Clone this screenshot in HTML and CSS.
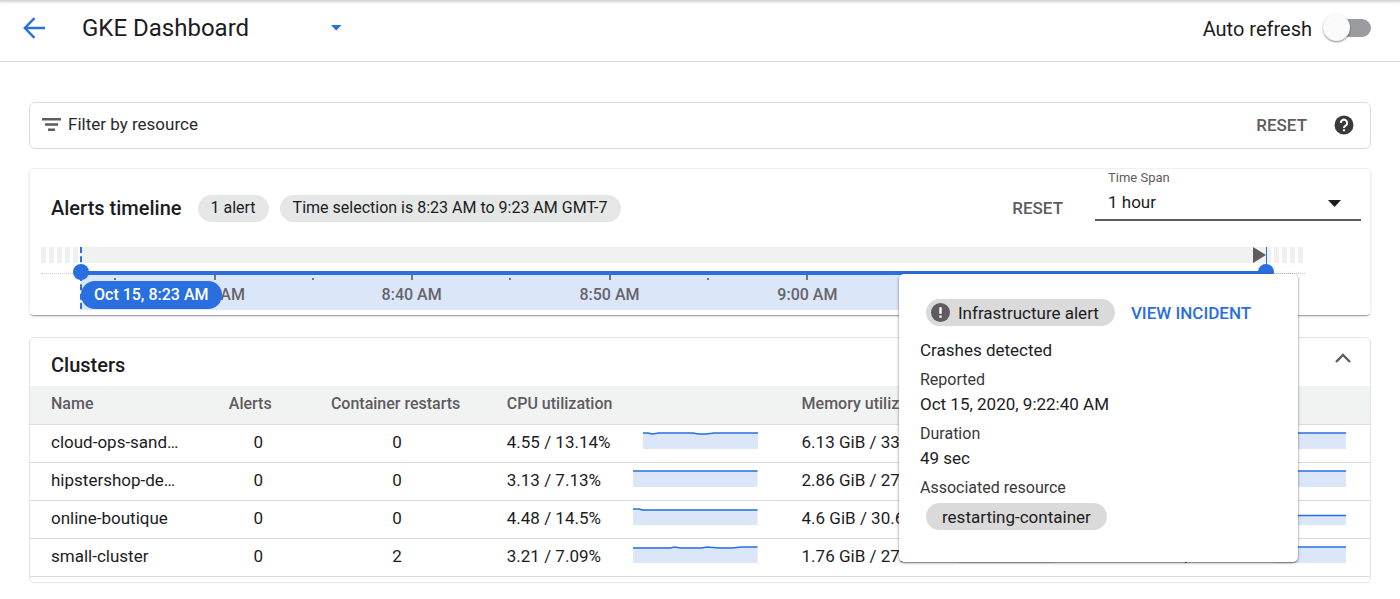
FILE: index.html
```html
<!DOCTYPE html>
<html lang="en">
<head>
<meta charset="utf-8">
<meta name="viewport" content="width=device-width, initial-scale=1">
<title>GKE Dashboard</title>
<link rel="stylesheet" href="styles.css">
</head>
<body>
<header class="topbar">
  <button class="icon-button" aria-label="Back">
    <svg width="22" height="22" viewBox="0 0 22 22" fill="none" stroke="currentColor" stroke-width="2.4"><path d="M22 11H2M11.5 1.2 1.8 11l9.7 9.8"/></svg>
  </button>
  <h1 class="title">GKE Dashboard</h1>
  <button class="icon-button title-menu" aria-label="Choose dashboard">
    <svg width="12" height="6" viewBox="0 0 12 6"><path d="M1 0h10.5L6.2 5.6z" fill="currentColor"/></svg>
  </button>
  <label class="refresh" for="auto-refresh">Auto refresh</label>
  <input class="switch" type="checkbox" role="switch" id="auto-refresh">
</header>

<main class="content">
  <section class="filter" aria-label="Filter">
    <svg class="filter-icon" width="19" height="13" viewBox="0 0 19 13" fill="currentColor"><path d="M0 0h19v2.4H0zM3 5.3h13v2.4H3zM6 10.6h7V13H6z"/></svg>
    <input class="filter-input" type="text" placeholder="Filter by resource" aria-label="Filter by resource">
    <button class="text-button">RESET</button>
    <button class="icon-button help" aria-label="Help">
      <svg width="20" height="20" viewBox="0 0 20 20"><circle cx="10" cy="10" r="9.5" fill="currentColor"/><path d="M6.8 7.9a3.2 3.2 0 1 1 5 2.6c-1.1.8-1.8 1.2-1.8 2.5" fill="none" stroke="#fff" stroke-width="2"/><path d="M9 14.3h2v2H9z" fill="#fff"/></svg>
    </button>
  </section>

  <section class="timeline">
    <div class="timeline-head">
      <h2 class="heading">Alerts timeline</h2>
      <span class="chip">1 alert</span>
      <span class="chip">Time selection is 8:23 AM to 9:23 AM GMT-7</span>
      <button class="text-button push">RESET</button>
      <div class="span-field">
        <label class="span-label" for="span">Time Span</label>
        <select class="span-select" id="span"><option>1 hour</option></select>
        <svg class="span-arrow" width="13" height="7" viewBox="0 0 13 7"><path d="M0 0h13L6.5 7z" fill="currentColor"/></svg>
      </div>
    </div>
    <div class="chart">
      <div class="stub"></div>
      <div class="range">
        <div class="lane">
          <svg class="alert-mark" width="14" height="16" viewBox="0 0 14 16"><path d="M1 0 14 8 1 16z" fill="currentColor"/></svg>
        </div>
        <div class="axis">
          <i class="tick minor" style="left:2.9%"></i>
          <i class="tick" style="left:11.3%"></i><span class="time" style="left:11.3%">8:30 AM</span>
          <i class="tick minor" style="left:19.6%"></i>
          <i class="tick" style="left:27.9%"></i><span class="time" style="left:27.9%">8:40 AM</span>
          <i class="tick minor" style="left:36.2%"></i>
          <i class="tick" style="left:44.6%"></i><span class="time" style="left:44.6%">8:50 AM</span>
          <i class="tick minor" style="left:52.9%"></i>
          <i class="tick" style="left:61.3%"></i><span class="time" style="left:61.3%">9:00 AM</span>
          <i class="tick minor" style="left:69.6%"></i>
          <i class="tick" style="left:77.9%"></i>
        </div>
        <i class="guide"></i><i class="guide guide-end"></i>
        <i class="handle"></i><i class="handle handle-end"></i>
        <span class="start-time">Oct 15, 8:23 AM</span>
        <aside class="popup" aria-label="Alert details">
          <div class="popup-head">
            <span class="chip alert-chip">
              <svg width="19" height="19" viewBox="0 0 19 19"><circle cx="9.5" cy="9.5" r="9.5" fill="#5f5b5e"/><path d="M8.3 4.2h2.4v6.6H8.3zM8.3 12.5h2.4v2.3H8.3z" fill="#fff"/></svg>
              Infrastructure alert
            </span>
            <a class="incident" href="#incident">VIEW INCIDENT</a>
          </div>
          <p class="summary">Crashes detected</p>
          <dl class="facts">
            <dt>Reported</dt><dd>Oct 15, 2020, 9:22:40 AM</dd>
            <dt>Duration</dt><dd>49 sec</dd>
            <dt>Associated resource</dt><dd><span class="chip resource-chip">restarting-container</span></dd>
          </dl>
        </aside>
      </div>
      <div class="stub stub-end"></div>
    </div>
  </section>

  <section class="clusters">
    <div class="clusters-head">
      <h2 class="heading">Clusters</h2>
      <button class="icon-button collapse" aria-label="Collapse clusters">
        <svg width="16" height="10" viewBox="0 0 16 10" fill="none" stroke="currentColor" stroke-width="2.4"><path d="m1 9 7-7 7 7"/></svg>
      </button>
    </div>
    <table class="table">
      <colgroup><col class="c-name"><col class="c-alerts"><col class="c-restarts"><col class="c-cpu"><col class="c-mem"><col></colgroup>
      <thead><tr><th>Name</th><th class="num">Alerts</th><th class="num">Container restarts</th><th>CPU utilization</th><th>Memory utilization</th><th>Disk utilization</th></tr></thead>
      <tbody>
        <tr><td>cloud-ops-sand…</td><td class="num alerts">0</td><td class="num restarts">0</td>
          <td><div class="usage">4.55 / 13.14% <svg class="spark" viewBox="0 0 120 17" preserveAspectRatio="none"><path class="area" d="M0 1h120v16H0z"/><path class="line" d="M0 1h5l5 1 6-1h36l6 1h8l8-1h46"/></svg></div></td>
          <td><div class="usage">6.13 GiB / 33.4% <svg class="spark" viewBox="0 0 120 17" preserveAspectRatio="none"><path class="area" d="M0 1h120v16H0z"/><path class="line" d="M0 1h120"/></svg></div></td>
          <td><div class="usage">12.4 GiB / 0.1% <svg class="spark" viewBox="0 0 120 17" preserveAspectRatio="none"><path class="area" d="M0 1h120v16H0z"/><path class="line" d="M0 1h120"/></svg></div></td></tr>
        <tr><td>hipstershop-de…</td><td class="num alerts">0</td><td class="num restarts">0</td>
          <td><div class="usage">3.13 / 7.13% <svg class="spark" viewBox="0 0 120 17" preserveAspectRatio="none"><path class="area" d="M0 1h120v16H0z"/><path class="line" d="M0 1h120"/></svg></div></td>
          <td><div class="usage">2.86 GiB / 27.1% <svg class="spark" viewBox="0 0 120 17" preserveAspectRatio="none"><path class="area" d="M0 1h120v16H0z"/><path class="line" d="M0 1h120"/></svg></div></td>
          <td><div class="usage">12.4 GiB / 0.1% <svg class="spark" viewBox="0 0 120 17" preserveAspectRatio="none"><path class="area" d="M0 1h120v16H0z"/><path class="line" d="M0 1h120"/></svg></div></td></tr>
        <tr><td>online-boutique</td><td class="num alerts">0</td><td class="num restarts">0</td>
          <td><div class="usage">4.48 / 14.5% <svg class="spark" viewBox="0 0 120 17" preserveAspectRatio="none"><path class="area" d="M0 1h120v16H0z"/><path class="line" d="M0 1h6l3 1h111"/></svg></div></td>
          <td><div class="usage">4.6 GiB / 30.6% <svg class="spark" viewBox="0 0 120 17" preserveAspectRatio="none"><path class="area" d="M0 1h120v16H0z"/><path class="line" d="M0 1h120"/></svg></div></td>
          <td><div class="usage">12.4 GiB / 0.1% <svg class="spark" viewBox="0 0 120 17" preserveAspectRatio="none"><path class="area" d="M0 7h120v10H0z"/><path class="line" d="M0 7.5h120"/></svg></div></td></tr>
        <tr><td>small-cluster</td><td class="num alerts">0</td><td class="num restarts">2</td>
          <td><div class="usage">3.21 / 7.09% <svg class="spark" viewBox="0 0 120 17" preserveAspectRatio="none"><path class="area" d="M0 1h120v16H0z"/><path class="line" d="M0 2h36l4-1 6 1h20l5-1 12 1h12l10-1h15"/></svg></div></td>
          <td><div class="usage">1.76 GiB / 27.7% <svg class="spark" viewBox="0 0 120 17" preserveAspectRatio="none"><path class="area" d="M0 1h120v16H0z"/><path class="line" d="M0 1h120"/></svg></div></td>
          <td><div class="usage">614.98 GiB / 0.05% <svg class="spark" viewBox="0 0 120 17" preserveAspectRatio="none"><path class="area" d="M0 1h120v16H0z"/><path class="line" d="M0 1h120"/></svg></div></td></tr>
      </tbody>
    </table>
  </section>
</main>
</body>
</html>
```

FILE: styles.css
```css
:root {
  --blue: #2a6fdf;
  --pale: #dbe6f9;
  --ink: #1c1c1e;
  --grey: #5f5b5e;
  --line: #dadcdc;
}
* { box-sizing: border-box; }
body { margin: 0; background: #fff; color: var(--ink); font: 17px/24px Roboto, sans-serif; }
h1, h2, p, dl, dd { margin: 0; }
button, input, select { font: inherit; color: inherit; border: 0; padding: 0; background: none; }
svg { display: block; flex: none; }

.icon-button { display: grid; place-items: center; flex: none; }
.text-button { color: var(--grey); font-size: 17px; font-weight: 500; }
.push { margin-left: auto; }
.heading { font-size: 20px; line-height: 24px; font-weight: 500; }
.chip { display: inline-flex; align-items: center; height: 27px; padding: 0 13px; border-radius: 14px; background: #e5e6e6; font-size: 16px; white-space: nowrap; }

.topbar { display: flex; align-items: center; height: 62px; padding: 0 29px 6px 23px; border-bottom: 1px solid var(--line); box-shadow: inset 0 4px 3px -2px #cfd2d2; }
.topbar .icon-button { color: var(--blue); }
.title { width: 248px; margin-left: 37px; font-size: 24px; line-height: 32px; font-weight: 400; }
.refresh { margin-left: auto; padding-top: 2px; font-size: 20px; }
.switch { appearance: none; position: relative; width: 44px; height: 18px; margin: 0 0 0 15px; border-radius: 9px; background: #9b9ca0; }
.switch::before { content: ""; position: absolute; left: -4px; top: -5px; width: 27px; height: 27px; border-radius: 50%; background: #fafafa; box-shadow: 0 1px 2px #0007; }

.content { display: flex; flex-direction: column; padding: 40px 29px 16px; }
.filter { display: flex; align-items: center; height: 47px; padding: 0 16px 2px 12px; border: 1px solid var(--line); border-radius: 6px; }
.filter-icon { color: var(--grey); }
.filter-input { flex: 1; min-width: 0; margin-left: 7px; padding-bottom: 1px; outline: 0; }
.filter-input::placeholder { color: #29292b; opacity: 1; }
.help { margin-left: 27px; color: #3c393b; }

.timeline { height: 148px; margin-top: 19px; border-radius: 5px; border: 1px solid #eff1f1; border-bottom-color: #a5a8a8; box-shadow: 0 1px 2px #0002; }
.timeline-head { display: flex; align-items: center; height: 78px; padding: 0 9px 0 21px; }
.timeline-head .chip { margin-left: 11px; }
.timeline-head .heading + .chip { margin-left: 16px; }
.span-field { position: relative; align-self: flex-start; width: 266px; margin-left: 32px; border-bottom: 2px solid var(--grey); }
.span-label { display: block; padding-left: 13px; font-size: 13px; line-height: 17px; color: var(--grey); }
.span-select { appearance: none; display: block; width: 100%; height: 33px; padding: 0 32px 2px 13px; }
.span-arrow { position: absolute; right: 20px; bottom: 12px; pointer-events: none; }

.chart { display: grid; grid-template-columns: 40px minmax(0, 1fr) 39px; padding: 0 65px 0 11px; }
.stub { height: 27px; padding-bottom: 10px; border-bottom: 1px dotted #c9cdd0; background: repeating-linear-gradient(90deg, #eff1f1 0 5px, transparent 5px 8px) content-box; }
.range { position: relative; }
.lane { display: flex; justify-content: flex-end; height: 16px; margin-bottom: 8px; background: #f0f2f2; color: var(--grey); }
.axis { position: relative; height: 39px; border-top: 4px solid var(--blue); background: var(--pale); }
.tick { position: absolute; top: 0; width: 2px; height: 5px; margin-left: -1px; background: #77767a; }
.minor { top: 3px; height: 2px; }
.time { position: absolute; top: 10px; width: 80px; margin-left: -40px; color: #66646a; font-size: 16px; line-height: 20px; text-align: center; font-weight: 500; }
.guide { position: absolute; left: -1px; top: 0; height: 62px; border-left: 2px dashed var(--blue); }
.guide-end { left: 100%; height: 20px; border-left: 1px solid var(--blue); }
.handle { position: absolute; left: -8px; top: 17px; width: 16px; height: 16px; border-radius: 50%; background: var(--blue); }
.handle-end { left: auto; right: -8px; }
.start-time { position: absolute; left: 0; top: 34px; padding: 0 13px; border-radius: 14px; background: var(--blue); color: #fff; font-size: 16px; line-height: 28px; font-weight: 500; white-space: nowrap; }

.popup { position: absolute; z-index: 2; right: -32px; top: 27px; width: 399px; height: 288px; padding: 25px 21px; border-radius: 5px; background: #fff; box-shadow: 0 1px 2px #0008, 0 0 4px #0002; }
.popup-head { display: flex; align-items: center; gap: 16px; padding-left: 6px; }
.popup .chip { background: #dadada; font-size: 17px; }
.alert-chip { gap: 8px; padding: 0 16px 0 5px; }
.incident { color: var(--blue); font-weight: 500; text-decoration: none; }
.summary { margin-top: 12px; }
.facts dt { margin-top: 6px; color: #39383b; font-size: 16px; }
.facts dd { line-height: 24px; }
.resource-chip { margin: 3px 0 0 6px; padding: 0 16px; }

.clusters { margin-top: 21px; padding-bottom: 5px; border: 1px solid #e3e5e5; border-radius: 5px; }
.clusters-head { display: flex; align-items: center; justify-content: space-between; height: 48px; padding: 6px 19px 0 21px; }
.collapse { height: 24px; margin-top: -15px; color: var(--grey); }
.table { width: 100%; table-layout: fixed; border-collapse: collapse; }
.c-name { width: 170px; }
.c-alerts { width: 7.5%; }
.c-restarts { width: 14.2%; }
.c-cpu { width: 22%; }
.c-mem { width: 22.1%; }
.table th, .table td { height: 38px; padding: 0 0 2px 16px; border-bottom: 1px solid var(--line); text-align: left; white-space: nowrap; overflow: hidden; }
.table th { background: #f1f3f3; color: var(--grey); font-size: 16px; font-weight: 500; }
.table th:first-child, .table td:first-child { padding-left: 21px; }
.table .num { padding-left: 0; text-align: center; }
.table .alerts { padding-left: 16px; }
.table .restarts { padding-left: 3px; }
.usage { display: flex; align-items: center; gap: 32px; padding-right: 28px; }
td:last-child .usage { padding-right: 24px; }
.spark { flex: 1; min-width: 0; height: 17px; margin-top: -3px; }
.area { fill: var(--pale); }
.line { fill: none; stroke: var(--blue); stroke-width: 1.5; vector-effect: non-scaling-stroke; }
```
